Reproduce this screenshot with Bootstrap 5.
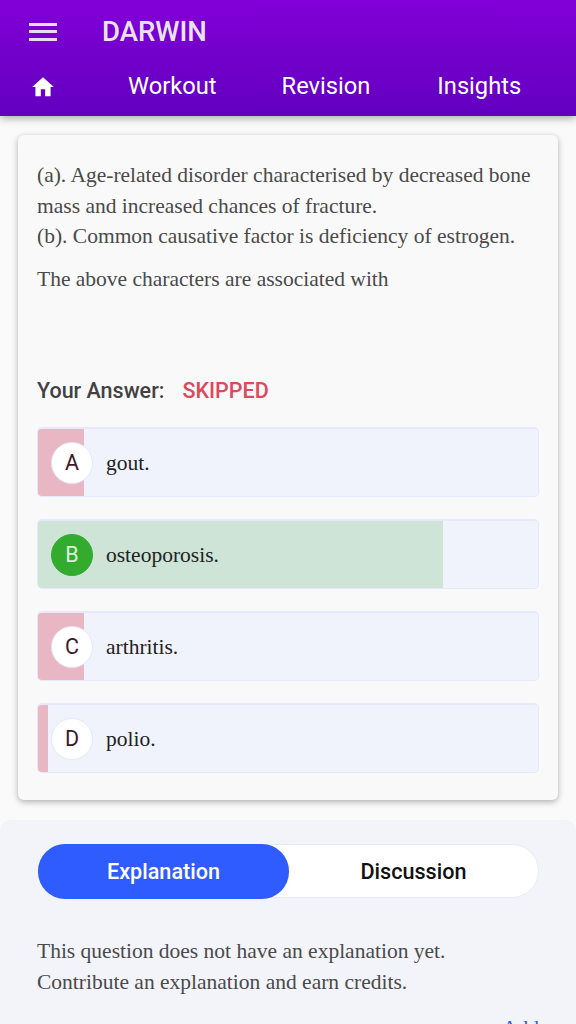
<!DOCTYPE html>
<html lang="en">
<head>
<meta charset="utf-8">
<title>Darwin</title>
<link href="https://cdn.jsdelivr.net/npm/bootstrap@5.3.0/dist/css/bootstrap.min.css" rel="stylesheet">
<style>
html,body{background:#fafafa;font-family:Roboto,sans-serif;}
.top-head{height:116px;background:linear-gradient(180deg,#8200d7 0%,#6200bf 100%);box-shadow:0 2px 8px rgba(0,0,0,.35);position:relative;z-index:2;}
.top-row{height:63px;padding-left:29px;gap:45px;}
.burger{width:28px;height:18px;display:flex;flex-direction:column;justify-content:space-between;}
.burger span{display:block;height:3px;background:#eadcf6;}
.brand-name{font-size:27.5px;font-weight:500;color:#e9e3f1;line-height:1;}
.tab-row{height:47px;}
.tab-row a{color:#fff;text-decoration:none;font-size:23.7px;line-height:1;}
.home-ico{margin-left:30px;width:26px;height:26px;}
.tl1{margin-left:72px;}.tl2{margin-left:65px;}.tl3{margin-left:67px;}
.q-card{margin:19px 18px 0;width:540px;height:665px;background:#f9f9f9;border-radius:6px;box-shadow:0 2px 6px rgba(0,0,0,.3);padding:25px 19px 0;}
.q-text{font-family:"Liberation Serif",serif;font-size:21.5px;line-height:30.7px;color:#4a4a4a;}
.q-text p{margin:0;}
.q-second{margin-top:12px!important;}
.ans-row{margin-top:78px;height:36px;font-size:21.5px;font-weight:500;color:#424242;gap:18px;}
.skip{color:#dc4a5d;}
.opt-list{margin-top:18px;gap:22px;}
.opt{height:70px;width:502px;border:1px solid #e4e9fc;border-top-width:2px;border-radius:5px;background:#f0f3fc;position:relative;overflow:hidden;}
.opt-bar{position:absolute;left:0;top:0;bottom:0;}
.bar-red{background:#e9b7c3;}
.bar-green{background:#cee4d7;}
.opt-body{position:relative;height:100%;padding-left:13px;padding-top:1px;gap:13px;}
.opt-circle{width:42px;height:42px;border-radius:50%;background:#fff;border:1px solid #e4e9fc;font-size:21.5px;color:#3c1a2b;flex:none;}
.circle-ok{background:#33ab2f;border-color:#33ab2f;color:#d9f2d8;}
.opt-txt{font-family:"Liberation Serif",serif;font-size:21.5px;color:#222;}
.low-panel{margin-top:20px;background:#f3f4fa;border-radius:10px 10px 0 0;padding:24px 37px 0 38px;height:204px;overflow:hidden;}
.pill-wrap{height:54px;width:501px;background:#fff;border:1px solid #e4e9fc;border-radius:27px;}
.pill-on,.pill-off{height:100%;font-size:21.6px;font-weight:500;padding-top:2px;}
.pill-on{width:251px;background:#2f5cff;color:#fff;border-radius:27px;margin:-1px 0 -1px -1px;height:55px;}
.pill-off{flex:1;color:#111;}
.exp-text{margin:38px 0 0 -1px;font-family:"Liberation Serif",serif;font-size:21.5px;line-height:31px;color:#4a4a4a;}
.add-link{font-family:"Liberation Serif",serif;font-size:21.5px;color:#2f5cff;text-align:right;line-height:31px;margin-top:15px;}
</style>
</head>
<body>
<header class="top-head">
  <div class="top-row d-flex align-items-center">
    <div class="burger"><span></span><span></span><span></span></div>
    <div class="brand-name">DARWIN</div>
  </div>
  <nav class="tab-row d-flex align-items-center">
    <svg class="home-ico" viewBox="0 0 24 24" fill="#fff"><path d="M10 20.5v-6.5h4v6.5h5v-8.5h3L12 3 2 12h3v8.5z"/></svg>
    <a href="#" class="tl1">Workout</a>
    <a href="#" class="tl2">Revision</a>
    <a href="#" class="tl3">Insights</a>
  </nav>
</header>
<main>
  <section class="q-card">
    <div class="q-text">
      <p>(a). Age-related disorder characterised by decreased bone mass and increased chances of fracture.</p>
      <p>(b). Common causative factor is deficiency of estrogen.</p>
      <p class="q-second">The above characters are associated with</p>
    </div>
    <div class="ans-row d-flex align-items-center"><span>Your Answer:</span><span class="skip">SKIPPED</span></div>
    <div class="opt-list d-flex flex-column">
      <div class="opt">
        <div class="opt-bar bar-red" style="width:46px"></div>
        <div class="opt-body d-flex align-items-center"><div class="opt-circle d-flex align-items-center justify-content-center">A</div><div class="opt-txt">gout.</div></div>
      </div>
      <div class="opt">
        <div class="opt-bar bar-green" style="width:405px"></div>
        <div class="opt-body d-flex align-items-center"><div class="opt-circle circle-ok d-flex align-items-center justify-content-center">B</div><div class="opt-txt">osteoporosis.</div></div>
      </div>
      <div class="opt">
        <div class="opt-bar bar-red" style="width:46px"></div>
        <div class="opt-body d-flex align-items-center"><div class="opt-circle d-flex align-items-center justify-content-center">C</div><div class="opt-txt">arthritis.</div></div>
      </div>
      <div class="opt">
        <div class="opt-bar bar-red" style="width:10px"></div>
        <div class="opt-body d-flex align-items-center"><div class="opt-circle d-flex align-items-center justify-content-center">D</div><div class="opt-txt">polio.</div></div>
      </div>
    </div>
  </section>
  <section class="low-panel">
    <div class="pill-wrap d-flex">
      <div class="pill-on d-flex align-items-center justify-content-center">Explanation</div>
      <div class="pill-off d-flex align-items-center justify-content-center">Discussion</div>
    </div>
    <div class="exp-text">This question does not have an explanation yet.<br>Contribute an explanation and earn credits.</div>
    <div class="add-link">Add</div>
  </section>
</main>
<script src="https://cdn.jsdelivr.net/npm/bootstrap@5.3.0/dist/js/bootstrap.bundle.min.js"></script>
</body>
</html>
